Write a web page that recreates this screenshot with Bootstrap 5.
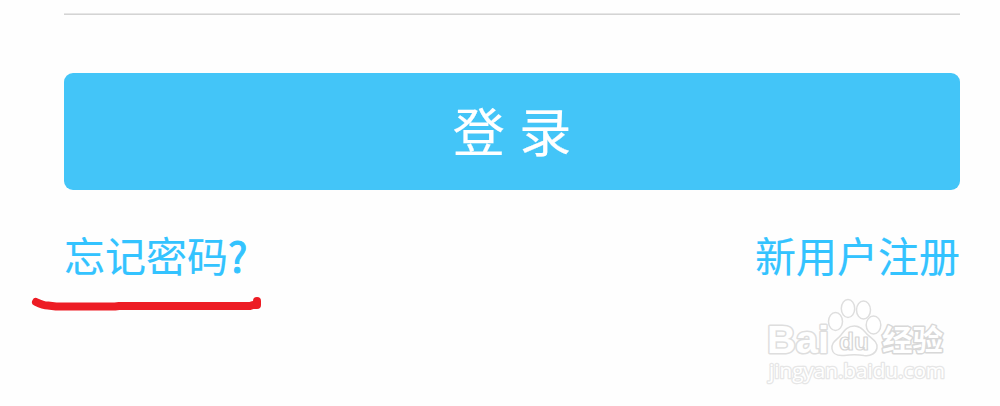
<!DOCTYPE html>
<html lang="zh-CN">
<head>
  <meta charset="UTF-8" />
  <meta name="viewport" content="width=device-width, initial-scale=1.0"/>
  <title>登录</title>
  <link href="https://cdn.jsdelivr.net/npm/bootstrap@5.3.3/dist/css/bootstrap.min.css" rel="stylesheet">
  <style>
    body {
      background-color: #fefefe;
      font-family: "Noto Sans CJK SC", sans-serif;
      overflow: hidden;
    }
    .login-page {
      height: 406px;
      padding: 13px 40px 0 64px;
    }
    .field-line {
      height: 2px;
      background: linear-gradient(#e6e6e6 50%, #d4d4d4 50%);
      margin-bottom: 58px;
    }
    .btn-login {
      --bs-btn-color: #fff;
      --bs-btn-bg: #43c5f8;
      --bs-btn-hover-color: #fff;
      --bs-btn-hover-bg: #2fb8ee;
      --bs-btn-border-width: 0;
      --bs-btn-border-radius: 9px;
      height: 117px;
      font-size: 52px;
      line-height: 1;
      word-spacing: 3px;
      -webkit-text-stroke: .2px;
    }
    .login-links {
      margin-top: 34px;
      font-size: 41px;
      line-height: 60px;
      -webkit-text-stroke: .15px;
    }
    .login-links a {
      color: #33c3ff;
    }
    .question {
      -webkit-text-stroke: 1px;
    }
    .red-mark {
      left: 28px;
      top: 292px;
    }
    .watermark {
      left: 760px;
      top: 292px;
    }
  </style>
</head>
<body>
  <main class="login-page position-relative">
    <div class="field-line"></div>
    <button type="button" class="btn btn-login w-100 px-0 pt-0 pb-1">登 录</button>
    <div class="login-links d-flex justify-content-between">
      <a href="#" class="text-decoration-none">忘记密码<span class="question">?</span></a>
      <a href="#" class="text-decoration-none">新用户注册</a>
    </div>

    <!-- hand-drawn underline -->
    <svg class="red-mark position-absolute" width="240" height="24" fill="none" stroke="#ed1c24" stroke-width="8" stroke-linecap="round" stroke-linejoin="round">
      <path d="M8 10C12 12 16 13.500 20 13.500L28 14.500H87L91 14H222L225 13H229V9"/>
    </svg>

    <!-- watermark -->
    <svg class="watermark position-absolute" width="200" height="100" fill="#fff" stroke="#dedede" stroke-width="1.500" stroke-linejoin="round">
      <text x="7" y="61" font-family="Liberation Sans, sans-serif" font-size="38" font-weight="bold" paint-order="stroke" stroke-width="3" textLength="62" lengthAdjust="spacingAndGlyphs">Bai</text>
      <ellipse cx="75.500" cy="29.500" rx="7" ry="9"/>
      <ellipse cx="88" cy="16.500" rx="6.700" ry="9"/>
      <ellipse cx="103.500" cy="18" rx="7" ry="9"/>
      <ellipse cx="113.500" cy="33" rx="7.300" ry="9"/>
      <path d="M94.500 34C87 34 84 39 81 43C77 48 71 50 72 57C73 63 78 64 84 63.500C91 62.500 98 62.500 104 63.500C111 64.500 116 61 117 56C118 50 112 47 108 43C104 39 101 34 94.500 34Z"/>
      <text x="79" y="58" font-family="Liberation Sans, sans-serif" font-size="23" font-weight="bold" stroke="#d6d6d6" stroke-width="1.200" textLength="30" lengthAdjust="spacingAndGlyphs">du</text>
      <text x="122" y="59" font-family="Noto Sans CJK SC, sans-serif" font-size="29" font-weight="bold" paint-order="stroke" stroke="#d8d8d8" stroke-width="3" textLength="61" lengthAdjust="spacingAndGlyphs">经验</text>
      <text x="9" y="86" font-family="Open Sans, sans-serif" font-size="20" paint-order="stroke" stroke="#e6e6e6" stroke-width="2.500" textLength="176" lengthAdjust="spacingAndGlyphs">jingyan.baidu.com</text>
    </svg>
  </main>
  <script src="https://cdn.jsdelivr.net/npm/bootstrap@5.3.3/dist/js/bootstrap.bundle.min.js"></script>
</body>
</html>
